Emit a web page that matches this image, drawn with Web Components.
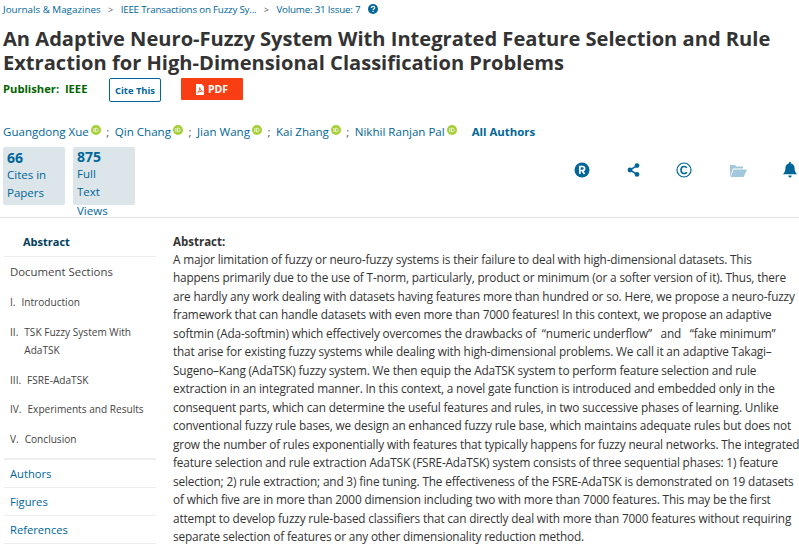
<!DOCTYPE html>
<html>
<head>
<meta charset="utf-8">
<title>IEEE Xplore article</title>
<style>
html, body { margin:0; padding:0; background:#fff; }
body { width:799px; height:549px; overflow:hidden; font-family:"Open Sans", sans-serif; color:#333; }
</style>
</head>
<body>
<article-page>
	<bread-crumbs></bread-crumbs>
	<article-title>An Adaptive Neuro-Fuzzy System With Integrated Feature Selection and Rule<br>Extraction for High-Dimensional Classification Problems</article-title>
	<publisher-row></publisher-row>
	<author-list></author-list>
	<metrics-row></metrics-row>
	<article-body>
		<section-nav slot="nav"></section-nav>
		<abstract-text>A major limitation of fuzzy or neuro-fuzzy systems is their failure to deal with high-dimensional datasets. This<br>happens primarily due to the use of T-norm, particularly, product or minimum (or a softer version of it). Thus, there<br>are hardly any work dealing with datasets having features more than hundred or so. Here, we propose a neuro-fuzzy<br>framework that can handle datasets with even more than 7000 features! In this context, we propose an adaptive<br>softmin (Ada-softmin) which effectively overcomes the drawbacks of &nbsp;“numeric underflow” &nbsp; and &nbsp; “fake minimum”<br>that arise for existing fuzzy systems while dealing with high-dimensional problems. We call it an adaptive Takagi–<br>Sugeno–Kang (AdaTSK) fuzzy system. We then equip the AdaTSK system to perform feature selection and rule<br>extraction in an integrated manner. In this context, a novel gate function is introduced and embedded only in the<br>consequent parts, which can determine the useful features and rules, in two successive phases of learning. Unlike<br>conventional fuzzy rule bases, we design an enhanced fuzzy rule base, which maintains adequate rules but does not<br>grow the number of rules exponentially with features that typically happens for fuzzy neural networks. The integrated<br>feature selection and rule extraction AdaTSK (FSRE-AdaTSK) system consists of three sequential phases: 1) feature<br>selection; 2) rule extraction; and 3) fine tuning. The effectiveness of the FSRE-AdaTSK is demonstrated on 19 datasets<br>of which five are in more than 2000 dimension including two with more than 7000 features. This may be the first<br>attempt to develop fuzzy rule-based classifiers that can directly deal with more than 7000 features without requiring<br>separate selection of features or any other dimensionality reduction method.</abstract-text>
	</article-body>
</article-page>
<script>
const BLUE = '#006699';

customElements.define('article-page', class extends HTMLElement {
	connectedCallback() {
		this.attachShadow({mode: 'open'}).innerHTML = `
		<style>
		:host { display:block; width:799px; }
		</style>
		<slot></slot>`;
	}
});

customElements.define('bread-crumbs', class extends HTMLElement {
	connectedCallback() {
		this.attachShadow({mode: 'open'}).innerHTML = `
		<style>
		:host { display:flex; align-items:center; height:18px; padding-left:3px; font-size:9.8px; color:${BLUE}; white-space:nowrap; }
		i { font-style:normal; color:#555; width:20px; text-align:center; font-size:9px; }
		span + i + span { letter-spacing:-.21px; }
		svg { margin-left:8px; }
		</style>
		<span>Journals &amp; Magazines</span><i>&gt;</i>
		<span>IEEE Transactions on Fuzzy Sy...</span><i>&gt;</i>
		<span>Volume: 31 Issue: 7</span>
		<svg width="10" height="10" viewBox="0 0 10 10"><circle cx="5" cy="5" r="5" fill="${BLUE}"/><path d="M3.300 3.900C3.400 2.800 4.100 2.300 5 2.300c1 0 1.700.6 1.700 1.400 0 1.300-1.600 1.200-1.600 2.400" fill="none" stroke="#fff" stroke-width="1.200"/><rect x="4.400" y="6.800" width="1.300" height="1.200" fill="#fff"/></svg>`;
	}
});

customElements.define('article-title', class extends HTMLElement {
	connectedCallback() {
		this.attachShadow({mode: 'open'}).innerHTML = `
		<style>
		:host { display:block; margin-top:9px; padding-left:3px; font-size:20.1px; line-height:24px; font-weight:700; color:#333; white-space:nowrap; }
		</style>
		<slot></slot>`;
	}
});

customElements.define('publisher-row', class extends HTMLElement {
	connectedCallback() {
		this.attachShadow({mode: 'open'}).innerHTML = `
		<style>
		:host { display:flex; align-items:flex-start; margin-top:3px; padding-left:3px; height:24px; }
		b { color:#006400; font-size:11.2px; width:106px; line-height:22px; }
		.cite { box-sizing:border-box; width:52px; height:24px; border:1px solid ${BLUE}; border-radius:2px; color:${BLUE}; font-size:9.4px; font-weight:700; display:flex; align-items:center; justify-content:center; }
		.pdf { box-sizing:border-box; width:62px; height:22px; margin-left:20px; background:#fa3e13; color:#fff; font-size:10.5px; font-weight:700; display:flex; align-items:center; justify-content:center; gap:4px; border-radius:1px; }
		</style>
		<b>Publisher:&nbsp; IEEE</b>
		<span class="cite">Cite This</span>
		<span class="pdf"><svg width="8" height="11" viewBox="0 0 8 11"><path d="M0 0h5.500L8 2.500V11H0z" fill="#fff"/><path d="M1.500 8.800C3 7.800 4 5.500 3.700 3.500 4 5.500 5 7 6.600 7.400 5 7.200 3 7.600 1.500 8.800z" fill="none" stroke="#fa3e13" stroke-width=".8"/></svg>PDF</span>`;
	}
});

customElements.define('author-list', class extends HTMLElement {
	connectedCallback() {
		const names = ['Guangdong Xue', 'Qin Chang', 'Jian Wang', 'Kai Zhang', 'Nikhil Ranjan Pal'];
		const orcid = `<svg width="10" height="10" viewBox="0 0 10 10"><circle cx="5" cy="5" r="5" fill="#a6ce39"/><path d="M2.900 3v4M4.400 3.200v3.600h1c2.400 0 2.400-3.600 0-3.600z" fill="none" stroke="#fff" stroke-width=".8"/></svg>`;
		this.attachShadow({mode: 'open'}).innerHTML = `
		<style>
		:host { display:flex; align-items:center; margin-top:19px; padding-left:3px; height:20px; font-size:11.55px; color:${BLUE}; white-space:nowrap; }
		svg { margin:-3px 0 0 2px; }
		i { font-style:normal; color:#555; width:14px; text-align:center; }
		b { margin-left:15px; font-size:11.4px; }
		</style>
		${names.map(n => `<span>${n}</span>${orcid}`).join('<i>;</i>')}
		<b>All Authors</b>`;
	}
});

customElements.define('metric-card', class extends HTMLElement {
	connectedCallback() {
		this.attachShadow({mode: 'open'}).innerHTML = `
		<style>
		:host { display:block; box-sizing:border-box; width:62px; height:58px; padding:var(--pad, 1.5px) 4px 0; background:#dbe5ea; border-radius:2px; color:${BLUE}; font-size:11.5px; line-height:18.5px; }
		b { display:block; font-size:14px; line-height:17px; }
		</style>
		<b>${this.getAttribute('count')}</b><slot></slot>`;
	}
});

customElements.define('metrics-row', class extends HTMLElement {
	connectedCallback() {
		this.attachShadow({mode: 'open'}).innerHTML = `
		<style>
		:host { display:flex; align-items:flex-start; gap:8px; box-sizing:border-box; height:71px; margin-top:6px; padding:0 2px 0 3px; border-bottom:1px solid #e2e2e2; width:799px; }
		.tools { margin-left:auto; display:flex; align-items:center; gap:36.5px; margin-top:15px; }
		.tools svg { display:block; }
		</style>
		<metric-card count="66">Cites in<br>Papers</metric-card>
		<metric-card count="875" style="--pad:.5px">Full<br>Text<br>Views</metric-card>
		<div class="tools">
			<svg width="16" height="16" viewBox="0 0 16 16"><circle cx="8" cy="8" r="7.500" fill="${BLUE}"/><path d="M5.800 12V4.500h2.600c1.500 0 2.200.8 2.200 2s-.8 2-2.200 2H5.800M8 8.500l2.600 3.500" fill="none" stroke="#fff" stroke-width="1.700"/></svg>
			<svg width="13" height="14" viewBox="0 0 13 14"><path d="M10 2.600 3 7l7 4.400" fill="none" stroke="${BLUE}" stroke-width="1.500"/><circle cx="10" cy="2.600" r="2.400" fill="${BLUE}"/><circle cx="3" cy="7" r="2.400" fill="${BLUE}"/><circle cx="10" cy="11.400" r="2.400" fill="${BLUE}"/></svg>
			<svg width="16" height="16" viewBox="0 0 16 16"><circle cx="8" cy="8" r="7" fill="none" stroke="${BLUE}" stroke-width="1.200"/><path d="M10.800 5.900C9.500 3.600 5 4 5 8s4.500 4.400 5.800 2.100" fill="none" stroke="${BLUE}" stroke-width="1.600"/></svg>
			<svg width="18" height="13" viewBox="0 0 18 13"><path d="M1 13V1h5l1.500 1.600H14v2H4L1 13z" fill="#a3c7dc"/><path d="M4.600 5.400H18L14.600 13H1.600z" fill="#a3c7dc"/></svg>
			<svg width="14" height="16" viewBox="0 0 14 16"><path d="M7 0c.6 0 1 .4 1 1v.6c2.400.5 3.600 2.400 3.600 4.600 0 3.200 1 4.400 2.400 6H0c1.400-1.600 2.400-2.800 2.400-6C2.400 4 3.600 2.100 6 1.600V1c0-.6.4-1 1-1z" fill="${BLUE}"/><path d="M5.400 13.500h3.200C8.600 15 7.700 15.600 7 15.600S5.400 15 5.400 13.500z" fill="${BLUE}"/></svg>
		</div>`;
	}
});

customElements.define('article-body', class extends HTMLElement {
	connectedCallback() {
		this.attachShadow({mode: 'open'}).innerHTML = `
		<style>
		:host { display:flex; gap:17px; padding-left:4px; }
		</style>
		<slot name="nav"></slot><slot></slot>`;
	}
});

customElements.define('section-nav', class extends HTMLElement {
	connectedCallback() {
		this.attachShadow({mode: 'open'}).innerHTML = `
		<style>
		:host { display:block; width:152px; flex:none; }
		div { border-bottom:1px solid #eee; }
		.abs { padding:17px 0 0 19px; height:21px; font-size:11px; font-weight:700; color:#00405c; line-height:14px; }
		.sec { padding:4px 0 4px 6px; border-bottom-width:2px; color:#444; font-size:10.1px; }
		.sec h4 { margin:0; padding:2px 0 7px; font-size:11.4px; font-weight:400; line-height:18px; }
		ol { list-style:none; margin:0; padding:0; }
		li { display:flex; line-height:18.5px; padding:5px 0 6px; }
		li span { margin-right:6px; }
		.lnk { height:27px; padding-left:6px; font-size:11.2px; line-height:27px; color:${BLUE}; }
		</style>
		<div class="abs">Abstract</div>
		<div class="sec"><h4>Document Sections</h4>
		<ol>
			<li><span>I.</span>Introduction</li>
			<li><span>II.</span><em style="font-style:normal">TSK Fuzzy System With<br>AdaTSK</em></li>
			<li><span>III.</span>FSRE-AdaTSK</li>
			<li><span>IV.</span>Experiments and Results</li>
			<li><span>V.</span>Conclusion</li>
		</ol></div>
		<div class="lnk">Authors</div>
		<div class="lnk">Figures</div>
		<div class="lnk">References</div>`;
	}
});

customElements.define('abstract-text', class extends HTMLElement {
	connectedCallback() {
		this.attachShadow({mode: 'open'}).innerHTML = `
		<style>
		:host { display:block; padding-top:14.5px; font-size:11.8px; letter-spacing:-.16px; line-height:18.53px; color:#333; white-space:nowrap; }
		b { display:block; line-height:17px; letter-spacing:0; font-size:11.5px; }
		</style>
		<b>Abstract:</b><slot></slot>`;
	}
});
</script>
</body>
</html>
